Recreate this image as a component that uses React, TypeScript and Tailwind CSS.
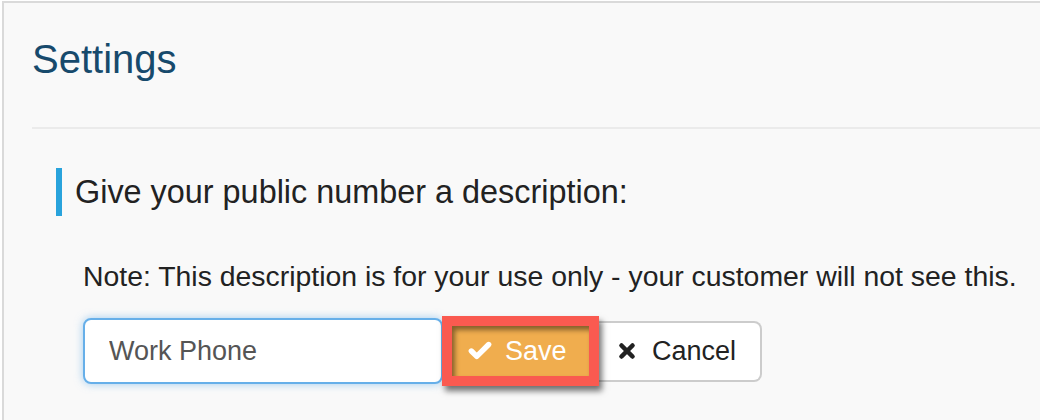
import { Check, X } from 'lucide-react';

const font = { fontFamily: '"Liberation Sans", Arial, sans-serif' };

export default function App() {
  return (
    <div
      className="h-[420px] w-[1040px] overflow-hidden bg-white pl-[2px] pt-[1px]"
      style={font}
    >
      <div className="h-full border-l-2 border-t-2 border-[#dadada] bg-[#f9f9f9]">
        <Header />
        <DescriptionForm />
      </div>
    </div>
  );
}

function Header() {
  return (
    <div className="pl-[28px]">
      <div className="h-[124px] pt-[32px]">
        <h1 className="text-[40px] leading-[48px] text-[#174a6c]">Settings</h1>
      </div>
      <div className="h-[2px] bg-[#ebebeb]" />
    </div>
  );
}

function DescriptionForm() {
  return (
    <div className="pl-[52px] pt-[39px]">
      <div className="flex h-[48px] items-center border-l-[6px] border-[#29a3dc] pl-[13px] text-[32.4px] leading-[48px] text-[#222]">
        Give your public number a description:
      </div>
      <div className="pl-[27px] pt-[40px]">
        <p className="text-[28.4px] leading-[40px] text-[#222]">
          Note: This description is for your use only - your customer will not
          see this.
        </p>
        <div className="mt-[20px] flex items-center">
          <input
            readOnly
            value="Work Phone"
            className="h-[66px] w-[360px] rounded-[8px] border-2 border-[#66afe9] bg-white px-[24px] text-[27px] text-[#555] shadow-[0_0_8px_rgba(102,175,233,0.6)] outline-none"
            style={font}
          />
          <SaveButton />
          <button className="-ml-[3px] flex h-[61px] items-center gap-[14px] rounded-r-[8px] border-2 border-l-0 border-[#ccc] bg-white pl-[20px] pr-[24px] text-[27px] text-[#222]">
            <X size={22} strokeWidth={5} className="text-[#222]" />
            Cancel
          </button>
        </div>
      </div>
    </div>
  );
}

function SaveButton() {
  return (
    <div className="relative z-10 -ml-[1px] border-[10px] border-[#fa5a50] shadow-[3px_5px_6px_rgba(0,0,0,0.55)]">
      <button className="flex h-[50px] w-[137px] items-center gap-[12px] bg-[#f0ad4e] pl-[15px] text-[27px] text-white shadow-[inset_3px_4px_5px_rgba(0,0,0,0.45)]">
        <Check size={26} strokeWidth={5} className="text-white" />
        Save
      </button>
    </div>
  );
}
